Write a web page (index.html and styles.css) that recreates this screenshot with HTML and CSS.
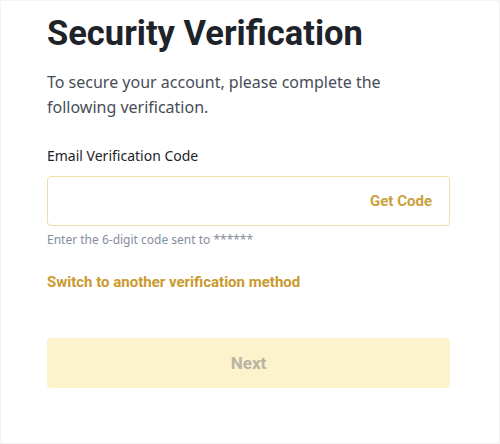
FILE: index.html
```html
<!DOCTYPE html>
<html lang="en">
<head>
  <meta charset="UTF-8" />
  <meta name="viewport" content="width=device-width, initial-scale=1.0" />
  <title>Security Verification</title>
  <link rel="stylesheet" href="styles.css">
</head>
<body>
  <div class="frame">
    <div class="container">
      <h2>Security Verification</h2>
      <p class="intro">To secure your account, please complete the following verification.</p>

      <label for="code">Email Verification Code</label>
      <div class="field">
        <input type="text" id="code">
        <span class="get-code">Get Code</span>
      </div>
      <div class="hint">Enter the 6-digit code sent to ******</div>

      <a class="switch" href="#">Switch to another verification method</a>

      <button class="next" disabled>Next</button>
    </div>
  </div>
</body>
</html>
```

FILE: styles.css
```css
body {
  margin: 0;
  font-family: "Noto Sans", Arial, sans-serif;
  background-color: #fff;
}
.frame {
  height: 444px;
  box-sizing: border-box;
  border: 1px solid #f4f4f4;
}
.container {
  width: 403px;
  padding: 9px 0 0 46px;
}
h2 {
  margin: 0;
  font-family: Roboto, "Noto Sans", sans-serif;
  font-size: 34.5px;
  line-height: 46px;
  font-weight: 700;
  color: #1e2329;
}
.intro {
  margin: 14px 0 0;
  font-size: 16px;
  line-height: 25px;
  color: #474d57;
}
label {
  display: block;
  margin-top: 26px;
  font-size: 14px;
  line-height: 20px;
  color: #1e2329;
}
.field {
  display: flex;
  align-items: center;
  height: 50px;
  margin-top: 10px;
  box-sizing: border-box;
  border: 1px solid #f0dea6;
  border-radius: 4px;
  padding: 0 17px 0 12px;
}
.field input {
  flex: 1;
  border: none;
  outline: none;
  font: inherit;
  background: transparent;
}
.get-code {
  font-family: Roboto, "Noto Sans", sans-serif;
  font-size: 15px;
  font-weight: 700;
  color: #cba13c;
}
.hint {
  margin-top: 6px;
  font-size: 12px;
  line-height: 16px;
  color: #848e9c;
}
.switch {
  display: block;
  margin-top: 24px;
  font-family: Roboto, "Noto Sans", sans-serif;
  font-size: 15px;
  font-weight: 700;
  line-height: 20px;
  color: #c99a2e;
  text-decoration: none;
}
.next {
  display: block;
  width: 100%;
  height: 50px;
  margin-top: 46px;
  border: none;
  border-radius: 4px;
  background-color: #fcf2cc;
  color: #b8b4a4;
  font-family: Roboto, "Noto Sans", sans-serif;
  font-size: 17px;
  font-weight: 700;
}
```
